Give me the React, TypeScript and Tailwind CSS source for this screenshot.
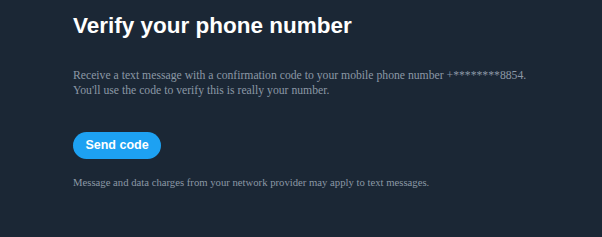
export default function App() {
  return (
    <div className="min-h-[237px] w-full bg-[#1b2735] pl-[73px] pt-[11px]">
      <h1 className="text-[22.5px] font-bold leading-[30px] text-white [font-family:'Liberation_Sans',Arial,sans-serif]">
        Verify your phone number
      </h1>
      <p className="mt-[27px] text-[11.7px] leading-[15px] text-[#8b98a5] [font-family:'Liberation_Serif','Times_New_Roman',serif]">
        Receive a text message with a confirmation code to your mobile phone number +********8854.
        <br />
        You'll use the code to verify this is really your number.
      </p>
      <button className="mt-[34px] h-[27px] w-[88px] rounded-full bg-[#1da1f2] text-[12.5px] font-bold text-white [font-family:'Liberation_Sans',Arial,sans-serif]">
        Send code
      </button>
      <p className="mt-[16px] text-[10.7px] leading-[14px] text-[#8b98a5] [font-family:'Liberation_Serif','Times_New_Roman',serif]">
        Message and data charges from your network provider may apply to text messages.
      </p>
    </div>
  );
}
